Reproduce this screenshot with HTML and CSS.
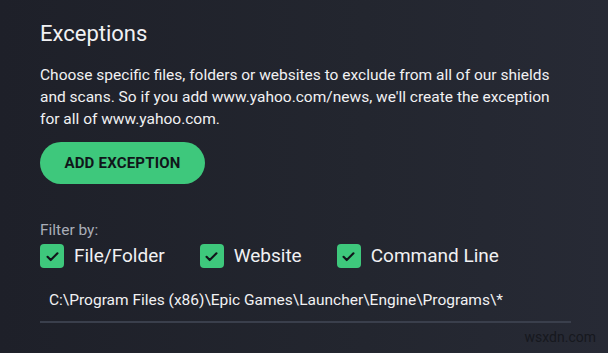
FILE: index.html
```html
<!DOCTYPE html>
<html lang="en">
<head>
    <meta charset="UTF-8">
    <title>Exceptions</title>
    <link rel="stylesheet" href="styles.css">
</head>
<body>
    <div class="panel">
        <h2 class="title">Exceptions</h2>
        <p class="desc">Choose specific files, folders or websites to exclude from all of our shields and scans. So if you add www.yahoo.com/news, we'll create the exception for all of www.yahoo.com.</p>
        <button class="add-btn">ADD EXCEPTION</button>

        <div class="filter">
            <div class="filter-label">Filter by:</div>
            <div class="filter-options">
                <label class="check"><span class="box"><svg viewBox="0 0 24 24" width="17" height="17"><path d="M5 12.5l4.5 4.5L19 7.5" fill="none" stroke="#11151a" stroke-width="3" stroke-linecap="round" stroke-linejoin="round"/></svg></span>File/Folder</label>
                <label class="check"><span class="box"><svg viewBox="0 0 24 24" width="17" height="17"><path d="M5 12.5l4.5 4.5L19 7.5" fill="none" stroke="#11151a" stroke-width="3" stroke-linecap="round" stroke-linejoin="round"/></svg></span>Website</label>
                <label class="check"><span class="box"><svg viewBox="0 0 24 24" width="17" height="17"><path d="M5 12.5l4.5 4.5L19 7.5" fill="none" stroke="#11151a" stroke-width="3" stroke-linecap="round" stroke-linejoin="round"/></svg></span>Command Line</label>
            </div>
        </div>

        <div class="exception-row">C:\Program Files (x86)\Epic Games\Launcher\Engine\Programs\*</div>
        <div class="watermark">wsxdn.com</div>
    </div>
</body>
</html>
```

FILE: styles.css
```css
:root {
    --green: #3ec87c;
    --text: #f1f1f3;
    --muted: #a9adb8;
    --line: #3a3f4c;
}

html, body {
    margin: 0;
    height: 100%;
}

body {
    font-family: Roboto, 'Liberation Sans', Arial, sans-serif;
    background: linear-gradient(90deg, #1e2029 0%, #23262f 60%, #272a35 100%);
    color: var(--text);
}

.panel {
    padding: 20px 37px 0 40px;
    height: 100%;
    box-sizing: border-box;
    display: flex;
    flex-direction: column;
}

.title {
    margin: 0;
    font-size: 22px;
    font-weight: 400;
    line-height: 28px;
}

.desc {
    margin: 16px 0 0;
    font-size: 15.5px;
    line-height: 22px;
    max-width: 515px;
}

.add-btn {
    margin-top: 12px;
    align-self: flex-start;
    width: 165px;
    height: 42px;
    border: none;
    border-radius: 21px;
    background: var(--green);
    color: #10161a;
    font-family: inherit;
    font-size: 15px;
    font-weight: 700;
    letter-spacing: 0.2px;
    cursor: pointer;
}

.filter {
    margin-top: 38px;
}

.filter-label {
    font-size: 15.5px;
    line-height: 16px;
    color: var(--muted);
}

.filter-options {
    display: flex;
    gap: 35px;
    margin-top: 6px;
}

.check {
    display: flex;
    align-items: center;
    gap: 10px;
    font-size: 19px;
    line-height: 24px;
}

.box {
    width: 24px;
    height: 24px;
    border-radius: 4px;
    background: var(--green);
    display: flex;
    align-items: center;
    justify-content: center;
}

.exception-row {
    margin-top: 23px;
    padding: 0 0 12px 9px;
    font-size: 15.5px;
    line-height: 18px;
    border-bottom: 2px solid var(--line);
}

.watermark {
    align-self: flex-end;
    margin: 6px -25px 0 0;
    font-size: 14px;
    color: #16181e;
}
```
